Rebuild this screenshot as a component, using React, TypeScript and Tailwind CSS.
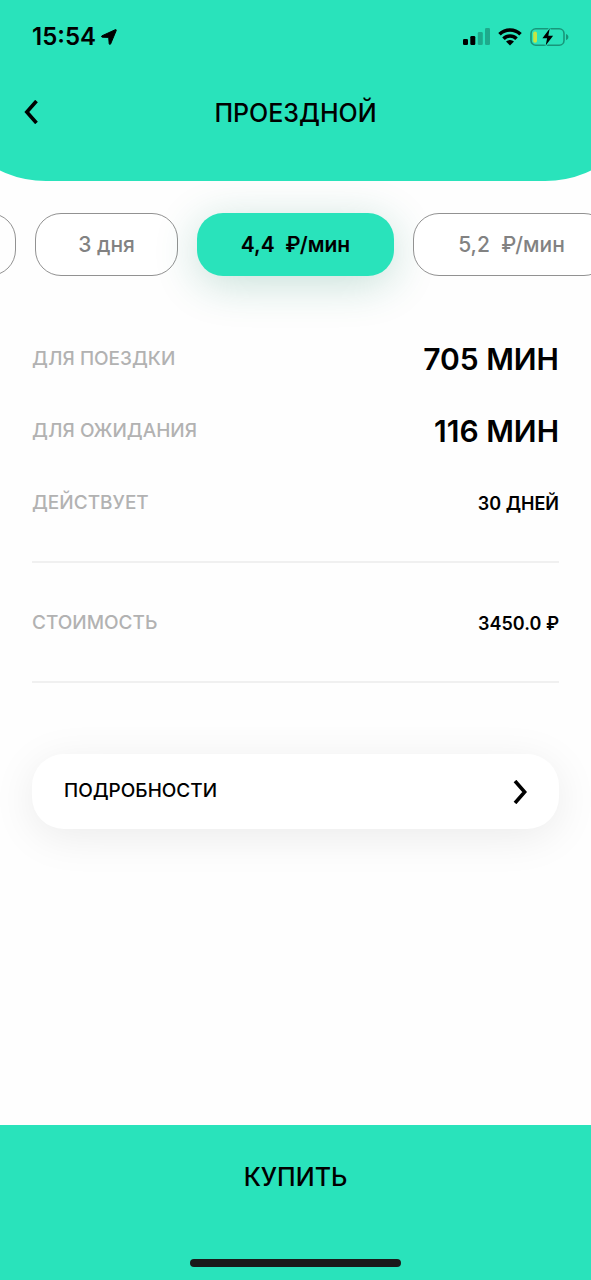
import { useState } from "react";

type Plan = { id: string; label: string; width: string };

const plans: Plan[] = [
  { id: "three-days", label: "3 дня", width: "w-[143px]" },
  { id: "rate-44", label: "4,4  ₽/мин", width: "w-[197px]" },
  { id: "rate-52", label: "5,2  ₽/мин", width: "w-[197px]" },
];

const rows = [
  { term: "ДЛЯ ПОЕЗДКИ", value: "705 МИН", large: true },
  { term: "ДЛЯ ОЖИДАНИЯ", value: "116 МИН", large: true },
  { term: "ДЕЙСТВУЕТ", value: "30 ДНЕЙ", large: false },
];

function LocationArrow() {
  return (
    <svg className="h-4 w-4" viewBox="0 0 16 16" aria-hidden="true">
      <path
        d="M1 6.8 14.3.7c.7-.3 1.2.2.9.9L9.6 15c-.3.6-1.300.5-1.400-.2L7.700 8.400 1.300 8.200C.5 8.200.3 7.100 1 6.800Z"
        stroke="currentColor"
        strokeWidth="1"
        strokeLinejoin="round"
      />
    </svg>
  );
}

function Signal() {
  return (
    <svg className="h-[18px] w-[27px]" viewBox="0 0 27 18" aria-hidden="true">
      <rect x="0" y="11" width="5" height="6" rx="1.3" />
      <rect x="7.3" y="8" width="5" height="9" rx="1.3" />
      <rect x="14.8" y="4" width="5" height="13" rx="1.3" opacity=".25" />
      <rect x="22" y="0" width="5" height="17" rx="1.3" opacity=".25" />
    </svg>
  );
}

function Wifi() {
  return (
    <svg className="h-[18px] w-6" viewBox="0 0 24 18" aria-hidden="true">
      <g fill="none" stroke="currentColor" strokeWidth="3.6">
        <path d="M1.5 6.3a15 15 0 0 1 21 0" />
        <path d="M5.5 10.7a9.2 9.2 0 0 1 13 0" />
      </g>
      <path d="M12 17.6 8 13.6a5.7 5.7 0 0 1 8 0Z" />
    </svg>
  );
}

function Battery() {
  return (
    <svg className="h-5 w-10" viewBox="0 0 40 20" aria-hidden="true">
      <rect x="1" y="1.8" width="33" height="16.4" rx="4.8" fill="none" stroke="#18967a" strokeWidth="1.6" />
      <path d="M36 7v6.2c1.5-.5 2.4-1.7 2.4-3.1S37.5 7.5 36 7Z" fill="#18967a" />
      <rect x="3.2" y="4.4" width="3.8" height="11.4" rx="1.8" fill="#c4e544" />
      <path d="M19.7 1.6 12.4 11.2h4.7l-1.4 7.2 7.4-9.7h-4.8Z" stroke="#29e3bb" strokeWidth="2.2" paintOrder="stroke" />
    </svg>
  );
}

export default function App() {
  const [selected, setSelected] = useState("rate-44");

  return (
    <div className="flex min-h-screen flex-col overflow-hidden bg-[#fefefe] font-['Inter','Noto_Sans',sans-serif] text-black">
      <header className="relative h-[181px]">
        <div className="absolute -inset-x-15 inset-y-0 rounded-b-[106px] bg-[#29e3bb]" />
        <div className="relative flex h-[74px] items-center justify-between pr-[21px] pl-8">
          <div className="flex items-center gap-[5px]">
            <time className="text-2xl font-semibold">15:54</time>
            <LocationArrow />
          </div>
          <div className="flex items-center gap-2">
            <Signal />
            <Wifi />
            <Battery />
          </div>
        </div>
        <div className="relative grid h-[76px] grid-cols-[64px_1fr_64px] items-center">
          <button type="button" aria-label="Назад" className="flex h-16 items-center pl-6">
            <svg className="h-6 w-4" viewBox="0 0 16 24" fill="none" stroke="currentColor" strokeWidth="3.6" aria-hidden="true">
              <path d="M12.5 1 2.8 12l9.7 11" />
            </svg>
          </button>
          <h1 className="pt-1 text-center text-[25px] font-medium">ПРОЕЗДНОЙ</h1>
        </div>
      </header>

      <main className="flex-1">
        <div className="-ml-[127px] flex gap-[19px] pt-8">
          <button type="button" aria-label="Предыдущий тариф" className="h-[63px] w-[143px] shrink-0 rounded-[26px] border border-[#929292]" />
          {plans.map((plan) => (
            <button
              key={plan.id}
              type="button"
              aria-pressed={selected === plan.id}
              onClick={() => setSelected(plan.id)}
              className={`h-[63px] shrink-0 rounded-[26px] text-[21px] whitespace-pre ${plan.width} ${
                selected === plan.id
                  ? "bg-[#29e3bb] font-semibold text-black shadow-[0_8px_44px_rgba(20,130,95,0.24)]"
                  : "border border-[#929292] bg-white font-medium text-[#828282]"
              }`}
            >
              {plan.label}
            </button>
          ))}
        </div>

        <div className="px-8 pt-[47px]">
          <dl>
            <div className="border-b-2 border-[#f0f0f0] pb-[22px]">
              {rows.map((row) => (
                <div key={row.term} className="flex h-[72px] items-center justify-between">
                  <dt className="text-[19px] font-medium text-[#b2b2b2]">{row.term}</dt>
                  <dd className={row.large ? "text-[30px] font-semibold" : "text-[18px] font-semibold"}>{row.value}</dd>
                </div>
              ))}
            </div>
            <div className="flex h-30 items-center justify-between border-b-2 border-[#f0f0f0] pt-0.5">
              <dt className="text-[19px] font-medium text-[#b2b2b2]">СТОИМОСТЬ</dt>
              <dd className="text-[18px] font-semibold">3450.0 ₽</dd>
            </div>
          </dl>

          <button
            type="button"
            className="mt-[71px] flex h-[75px] w-full items-center justify-between rounded-[32px] bg-white px-8 shadow-[0_8px_44px_rgba(0,0,0,0.08)]"
          >
            <span className="text-[19px] font-medium">ПОДРОБНОСТИ</span>
            <svg className="h-6 w-4" viewBox="0 0 16 24" fill="none" stroke="currentColor" strokeWidth="3.6" aria-hidden="true">
              <path d="m4 1 9.7 11L4 23" />
            </svg>
          </button>
        </div>
      </main>

      <footer className="flex flex-col items-center bg-[#29e3bb] pb-[13px]">
        <button type="button" className="h-[105px] w-full text-[25px] font-medium">
          КУПИТЬ
        </button>
        <div className="mt-[29px] h-2 w-[211px] rounded-full bg-[#1a1a1a]" />
      </footer>
    </div>
  );
}
